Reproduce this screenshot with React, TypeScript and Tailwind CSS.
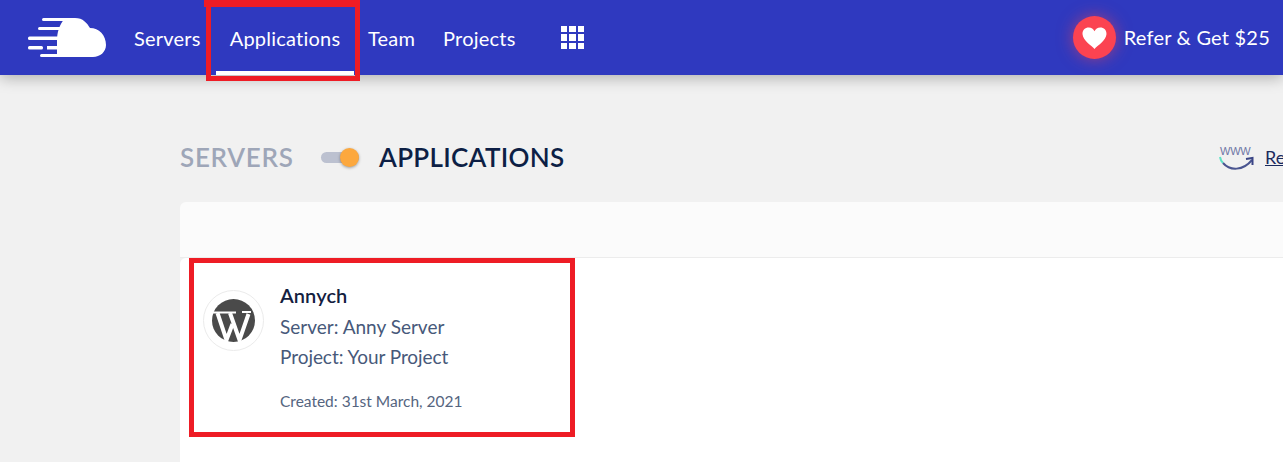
function Logo() {
  return (
    <svg width="80" height="42" viewBox="0 0 80 42" fill="white" className="block">
      <path d="M38 1 H48 C56 1 60 6 63 11 C72 11 79 18 79 28 C79 35 73 40 66 40 H30 V24 C30 16 32 8 38 1 Z" />
      <rect x="15" y="1" width="26" height="3" rx="1.500" />
      <rect x="11" y="10" width="26" height="3" rx="1.500" />
      <rect x="1" y="19.500" width="31" height="3.500" rx="1.500" />
      <rect x="1" y="29" width="15" height="3.500" rx="1.500" />
      <rect x="20" y="29" width="12" height="3.500" />
      <rect x="13" y="37" width="19" height="3" rx="1.500" />
    </svg>
  );
}

function WpMark() {
  return (
    <svg width="43" height="43" viewBox="0 0 43 43" className="block">
      <circle cx="21.500" cy="21.500" r="21.500" fill="#4a4a4a" />
      <g fill="none" stroke="white">
        <path d="M5.500 14 L14.500 41 L20.500 25" strokeWidth="4" />
        <path d="M18 14 L27.500 41 L36.500 15" strokeWidth="4" />
        <path d="M0 13.500 H24" strokeWidth="2" />
        <path d="M30 13 H39" strokeWidth="2" />
      </g>
    </svg>
  );
}

function Grid() {
  return (
    <div className="grid grid-cols-3 gap-[2px] w-[23px]">
      {Array.from({ length: 9 }).map((_, i) => (
        <span key={i} className="block w-[6.300px] h-[6.300px] bg-white" />
      ))}
    </div>
  );
}

function WwwIcon() {
  return (
    <div className="relative w-[36px] h-[28px]">
      <span className="absolute left-[1px] top-[0px] text-[11px] leading-[10px] tracking-[-0.2px] text-[#6f76a6] font-['Liberation_Sans',sans-serif]">
        WWW
      </span>
      <svg width="36" height="28" viewBox="0 0 36 28" fill="none" className="block">
        <path d="M1 11 C1.300 13 2.500 15.500 4 17" stroke="#5fe3c5" strokeWidth="2" />
        <path d="M4 17 C11 25 24 25 33 14" stroke="#4a5590" strokeWidth="2" />
        <path d="M27 13 L33.500 12 L33.500 19" stroke="#3a4585" strokeWidth="2" />
      </svg>
    </div>
  );
}

export default function App() {
  return (
    <div className="relative w-[1283px] h-[462px] overflow-hidden bg-[#f1f1f1] font-['Lato','Open_Sans',sans-serif]">
      <header className="relative h-[75px] bg-[#2f39bf] flex items-center text-white text-[20px] tracking-[0.22px] shadow-[0_3px_14px_rgba(0,0,0,0.28)]">
        <div className="ml-[27px] w-[107px]"><Logo /></div>
        <nav className="flex h-full items-center">
          <a className="w-[82px]">Servers</a>
          <a className="relative h-full w-[152px] flex items-center justify-center">
            <span className="mr-[14px]">Applications</span>
            <span className="absolute left-0 bottom-0 w-[138px] h-[4px] bg-white" />
          </a>
          <a className="w-[75px]">Team</a>
          <a className="w-[118px]">Projects</a>
          <Grid />
        </nav>
        <div className="ml-auto mr-[13px] flex items-center gap-[8px]">
          <div className="w-[43px] h-[43px] rounded-full bg-[#fb4351] flex items-center justify-center shadow-[0_0_16px_rgba(251,67,81,0.55)]">
            <svg width="25" height="22" viewBox="0 0 24 21" fill="white">
              <path d="M12 21 C9 18 1 13 .5 7 C.2 3 3 .5 6.500 .5 C9 .5 11 2 12 4 C13 2 15 .5 17.500 .5 C21 .5 23.800 3 23.500 7 C23 13 15 18 12 21 Z" />
            </svg>
          </div>
          <span className="-mt-[1px]">Refer &amp; Get $25</span>
        </div>
      </header>

      <main className="pl-[180px]">
        <div className="h-[127px] flex items-center pt-[37px]">
          <span className="shrink-0 text-[26px] tracking-[0.7px] text-[#9ea6b8] font-semibold w-[141px]">SERVERS</span>
          <span className="shrink-0 relative block w-[38px] h-[11px] rounded-full bg-[#bcc1d0] mr-[20px]">
            <span className="absolute right-0 -top-[4px] w-[19px] h-[19px] rounded-full bg-[#fca83e] shadow-[0_1px_3px_rgba(0,0,0,0.35)]" />
          </span>
          <span className="shrink-0 text-[26px] tracking-[0.3px] text-[#0d1f45] font-semibold w-[185px]">APPLICATIONS</span>
          <div className="ml-[655px] flex items-center gap-[10px] shrink-0 pt-[6px]">
            <WwwIcon />
            <a className="text-[18px] text-[#1a2a5e] underline -mt-[6px]">Re</a>
          </div>
        </div>
        <section className="w-[1200px] rounded-t-[6px] overflow-hidden">
          <div className="h-[55px] bg-[#fbfbfb] border-b border-[#ececec] box-content" />
          <div className="h-[210px] bg-white rounded-tl-[6px] pl-[23px] pt-[32px] flex gap-[16px]">
            <div className="w-[61px] h-[61px] rounded-full border border-[#ebebeb] flex items-center justify-center shrink-0">
              <WpMark />
            </div>
            <div className="-mt-[7px]">
              <div className="text-[20px] leading-[24px] tracking-[0.1px] font-semibold text-[#13203f]">Annych</div>
              <div className="mt-[5px] text-[19px] leading-[30px] text-[#47597a]">Server: Anny Server</div>
              <div className="text-[19px] leading-[30px] -tracking-[0.05px] text-[#47597a]">Project: Your Project</div>
              <div className="mt-[19px] text-[15.500px] leading-[20px] text-[#55657f]">Created: 31st March, 2021</div>
            </div>
          </div>
        </section>
      </main>

      <div className="absolute left-[204px] top-0 w-[4px] h-[7px] bg-[#ee1c25]" />
      <div className="absolute left-[206px] top-[-2px] w-[154px] h-[83px] border-[5px] border-t-[9px] border-[#ee1c25]" />
      <div className="absolute left-[189px] top-[258px] w-[386px] h-[179px] border-[5px] border-[#ee1c25]" />
    </div>
  );
}
